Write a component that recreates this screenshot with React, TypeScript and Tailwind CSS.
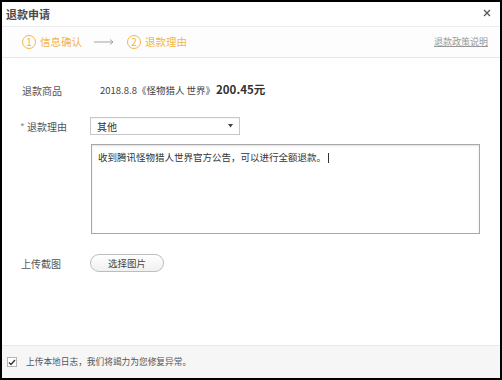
import React from 'react';

const font = "font-['Noto_Sans_CJK_SC',sans-serif]";

const StepCircle: React.FC<{ n: number }> = ({ n }) => (
    <span className="flex h-[14px] w-[14px] items-center justify-center rounded-full border border-[#f2b64a] text-[10px] leading-none text-[#f2b64a]">
        {n}
    </span>
);

const App: React.FC = () => {
    return (
        <div className={`${font} flex h-[380px] w-[502px] flex-col border-2 border-black bg-white text-[#333]`}>
            {/* title bar */}
            <div className="flex h-[25px] items-center justify-between border-b border-[#ececec] pl-[4px] pr-[9px]">
                <span className="text-[11px] font-bold text-[#4a4a4a]">退款申请</span>
                <svg width="8" height="8" viewBox="0 0 8 8" className="mb-[3px]">
                    <path d="M1 1 L7 7 M7 1 L1 7" stroke="#555" strokeWidth="1.3" />
                </svg>
            </div>

            {/* steps */}
            <div className="flex h-[31px] items-center justify-between border-b border-[#e6e6e6] bg-[#fdfdfd] pl-[20px] pr-[12px]">
                <div className="flex items-center text-[10.5px] text-[#f2b64a]">
                    <StepCircle n={1} />
                    <span className="ml-[4px]">信息确认</span>
                    <svg width="20" height="6" viewBox="0 0 20 6" className="ml-[12px] mr-[13px]">
                        <path d="M0 3 H19 M16 0.5 L19 3 L16 5.5" stroke="#999" strokeWidth="0.9" fill="none" />
                    </svg>
                    <StepCircle n={2} />
                    <span className="ml-[4px]">退款理由</span>
                </div>
                <span className="text-[9px] text-[#999] underline">退款政策说明</span>
            </div>

            {/* body */}
            <div className="flex flex-1 flex-col">
                <div className="mt-[23px] flex h-[18px] items-center">
                    <span className="w-[88px] pl-[20px] text-[10px] text-[#555]">退款商品</span>
                    <span className="ml-[10px] text-[9.5px] text-[#444]">2018.8.8《怪物猎人 世界》</span>
                    <span className="ml-[1px] text-[11.5px] font-bold text-[#333]">200.45元</span>
                </div>

                <div className="mt-[18px] flex h-[18px] items-center">
                    <span className="w-[88px] pl-[18px] text-[10px] text-[#555]">
                        <span className="text-[#888]">* </span>退款理由
                    </span>
                    <div className="flex h-[18px] w-[150px] items-center justify-between border border-[#c8c8c8] bg-white pl-[6px] pr-[6px] shadow-[inset_0_1px_1px_rgba(0,0,0,0.04)]">
                        <span className="text-[10px] text-[#333]">其他</span>
                        <svg width="5" height="4" viewBox="0 0 5 4">
                            <path d="M0 0 H5 L2.5 3.5 Z" fill="#444" />
                        </svg>
                    </div>
                </div>

                <div className="mt-[9px] flex">
                    <div className="w-[89px]" />
                    <div className="h-[90px] w-[389px] border border-[#a8a8a8] bg-white px-[6px] pt-[6px] text-[9.5px] leading-[12px] shadow-[inset_0_1px_2px_rgba(0,0,0,0.12)]">
                        <span className="text-[#333]">收到腾讯怪物猎人世界官方公告，可以进行全额退款。</span>
                        <span className="ml-[2px] inline-block h-[10px] w-px bg-[#333] align-middle" />
                    </div>
                </div>

                <div className="mt-[20px] flex h-[18px] items-center">
                    <span className="w-[88px] pl-[19px] text-[10px] text-[#555]">上传截图</span>
                    <button className="flex h-[18px] w-[74px] items-center justify-center rounded-full border border-[#bdbdbd] bg-gradient-to-b from-white to-[#f0f0f0] text-[9.5px] text-[#444]">
                        选择图片
                    </button>
                </div>
            </div>

            {/* footer */}
            <div className="flex h-[33px] items-center border-t border-[#e8e8e8] bg-[#f6f6f6] pl-[5px]">
                <span className="flex h-[10px] w-[10px] items-center justify-center border border-[#b5b5b5] bg-white">
                    <svg width="8" height="7" viewBox="0 0 8 7">
                        <path d="M1 3.5 L3 5.5 L7 1" stroke="#333" strokeWidth="1.4" fill="none" />
                    </svg>
                </span>
                <span className="ml-[9px] text-[8.7px] text-[#555]">上传本地日志，我们将竭力为您修复异常。</span>
            </div>
        </div>
    );
};

export default App;
